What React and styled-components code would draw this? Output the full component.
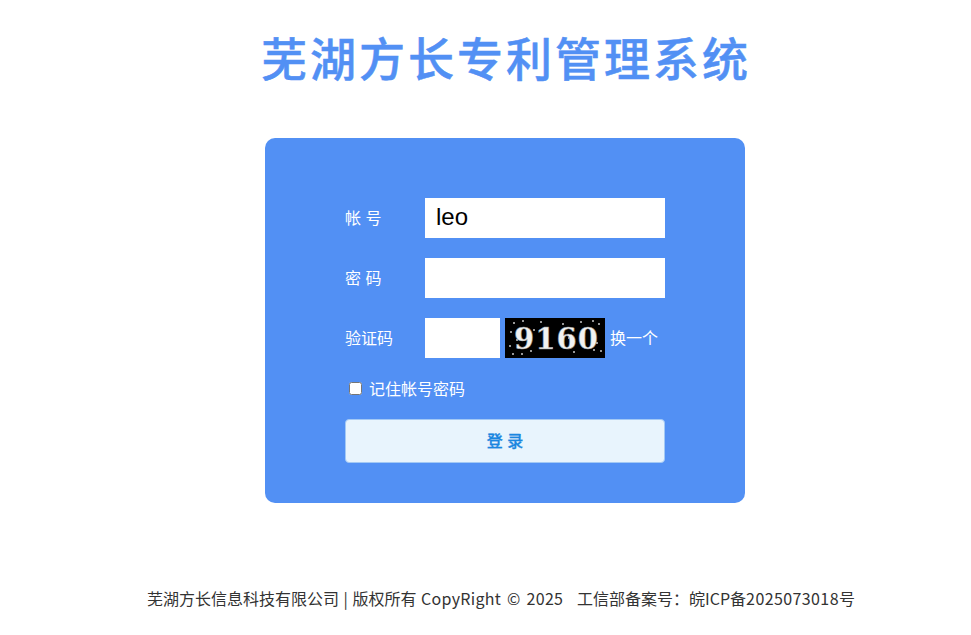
import React from 'react';
import styled, { createGlobalStyle } from 'styled-components';

const CJK = '"Liberation Sans", "Noto Sans CJK SC", sans-serif';

const GlobalStyle = createGlobalStyle`
  html, body { margin: 0; padding: 0; background: #fff; }
  body { font-family: ${CJK}; }
  * { box-sizing: border-box; }
`;

const Page = styled.div`
  width: 971px;
  height: 635px;
  overflow: hidden;
  display: flex;
  flex-direction: column;
`;

const Title = styled.h1`
  margin: 30px 0 0 241px;
  width: 530px;
  height: 60px;
  text-align: center;
  font-size: 46px;
  line-height: 60px;
  font-weight: 500;
  letter-spacing: 3px;
  color: #5290f4;
  -webkit-text-stroke: 0.5px #5290f4;
  white-space: nowrap;
`;

const Card = styled.form`
  margin: 48px 0 0 265px;
  width: 480px;
  height: 365px;
  padding: 60px 80px 0;
  background: #5290f4;
  border-radius: 10px;
  display: flex;
  flex-direction: column;
`;

const Row = styled.div`
  display: flex;
  align-items: center;
  height: 40px;
  margin-bottom: 20px;
`;

const Label = styled.label`
  width: 80px;
  padding-bottom: 2px;
  font-size: 16px;
  color: #fff;
`;

const Input = styled.input`
  width: ${(p) => p.$width || 240}px;
  height: 40px;
  border: 0;
  border-radius: 0;
  outline: 0;
  padding: 0 11px 2px;
  background: #fff;
  color: #000;
  font-family: ${CJK};
  font-size: 24px;
`;

const Captcha = styled.svg`
  display: block;
  width: 100px;
  height: 40px;
  margin-left: 5px;
  background: #000;
`;

const Refresh = styled.a`
  margin-left: 5px;
  padding-bottom: 2px;
  font-size: 16px;
  color: #fff;
`;

const Remember = styled.label`
  display: flex;
  align-items: center;
  height: 22px;
  margin: -1px 0 20px 4px;
  font-size: 16px;
  color: #fff;
`;

const Check = styled.input`
  width: 13px;
  height: 13px;
  margin: 0 7px 0 0;
`;

const Submit = styled.button`
  width: 320px;
  height: 44px;
  padding: 0 0 2px;
  border: 1px solid #a3c9f5;
  border-radius: 4px;
  background: #e8f4fd;
  color: #1a86e0;
  -webkit-text-stroke: 0.3px #1a86e0;
  font-family: ${CJK};
  font-size: 16px;
  font-weight: 500;
`;

const Footer = styled.div`
  margin: 85px 0 0 147px;
  font-family: "Noto Sans CJK SC", sans-serif;
  font-size: 16px;
  line-height: 20px;
  word-spacing: 1px;
  color: #333;
  white-space: pre;
`;

const Latin = styled.span`
  letter-spacing: ${(p) => p.$tracking}px;
  word-spacing: ${(p) => p.$gap || 0}px;
`;

const noise = [
  [9, 5], [18, 3], [36, 4], [58, 6], [76, 4], [88, 3], [94, 6], [6, 14], [12, 22], [5, 28],
  [8, 36], [17, 36], [26, 33], [47, 30], [56, 26], [69, 34], [89, 32], [96, 33], [92, 25],
  [42, 17], [29, 12], [64, 20],
];

const App = () => {
  return (
    <Page>
      <GlobalStyle />
      <Title>芜湖方长专利管理系统</Title>
      <Card onSubmit={(e) => e.preventDefault()}>
        <Row>
          <Label>帐 号</Label>
          <Input defaultValue="leo" />
        </Row>
        <Row>
          <Label>密 码</Label>
          <Input type="password" />
        </Row>
        <Row>
          <Label>验证码</Label>
          <Input $width={75} />
          <Captcha viewBox="0 0 100 40">
            {noise.map(([cx, cy]) => (
              <circle key={`${cx}-${cy}`} cx={cx} cy={cy} r="1" fill="#c8c8c8" />
            ))}
            <text
              x="51"
              y="31"
              textAnchor="middle"
              fontFamily="'DejaVu Serif', serif"
              fontWeight="700"
              fontSize="29"
              fill="#f2f2f2"
              stroke="#8a8a8a"
              strokeWidth="0.5"
              textLength="84"
            >
              9160
            </text>
          </Captcha>
          <Refresh>换一个</Refresh>
        </Row>
        <Remember>
          <Check type="checkbox" />
          记住帐号密码
        </Remember>
        <Submit>登 录</Submit>
      </Card>
      <Footer>
        芜湖方长信息科技有限公司 | 版权所有 <Latin $tracking={0.3} $gap={2}>CopyRight © 2025</Latin>{'   '}工信部备案号：皖ICP备<Latin $tracking={0.4}>2025073018</Latin>号
      </Footer>
    </Page>
  );
};

export default App;
